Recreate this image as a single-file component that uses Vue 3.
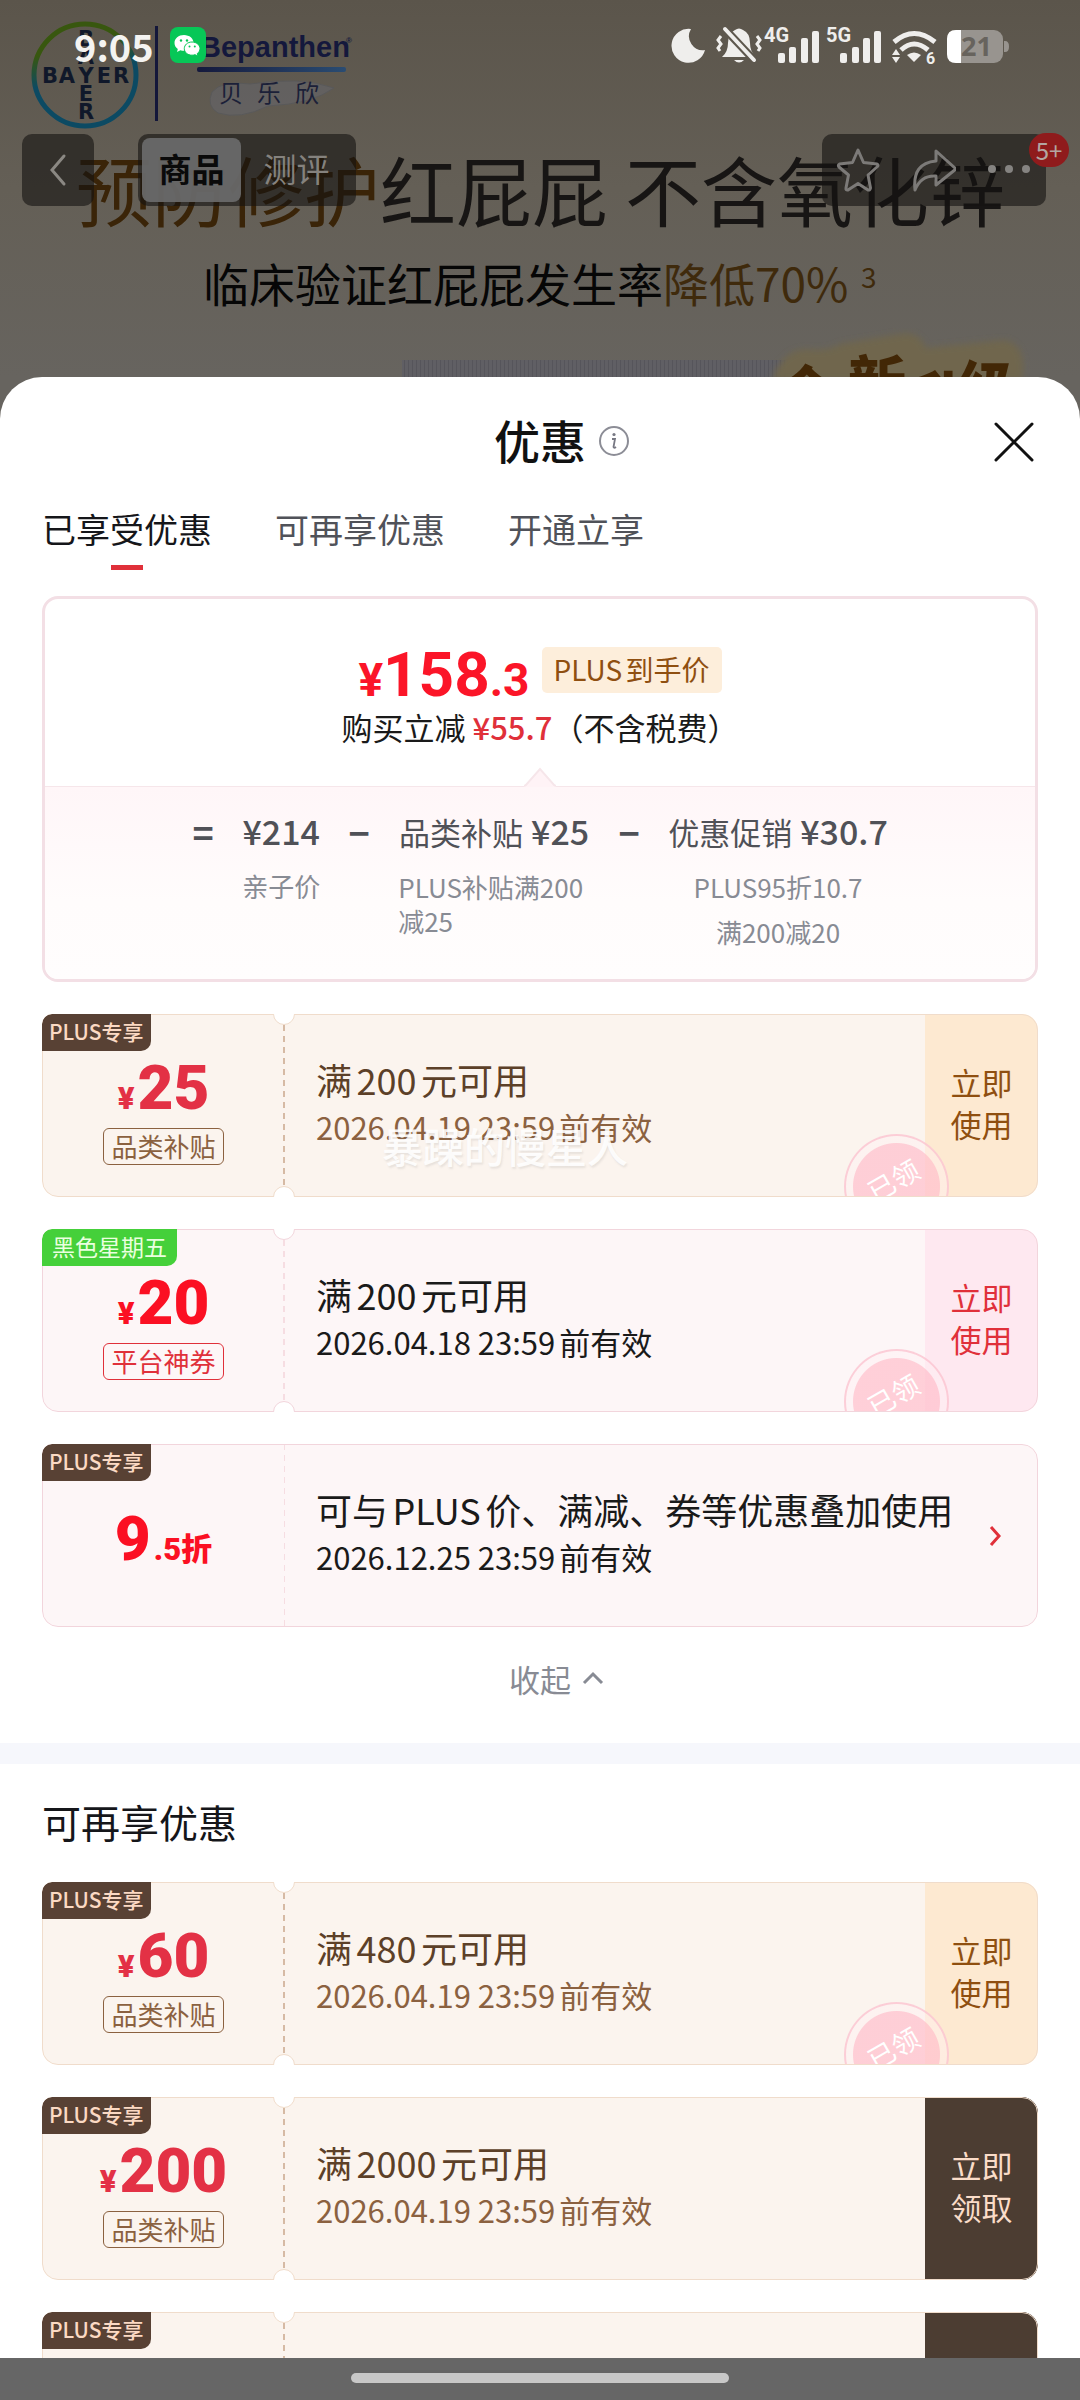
<script setup>
import { ref } from 'vue'

const tabs = ['已享受优惠', '可再享优惠', '开通立享']
const activeTab = ref(0)

const formula = [
  { op: '=', label: '', price: '¥214', notes: ['亲子价'] },
  { op: '−', label: '品类补贴', price: '¥25', notes: ['PLUS补贴满200减25'], left: true },
  { op: '−', label: '优惠促销', price: '¥30.7', notes: ['PLUS95折10.7', '满200减20'] },
]

const enjoyed = [
  { theme: 'plus', tag: 'PLUS专享', amount: '25', kind: '品类补贴', title: '满200元可用', date: '2026.04.19 23:59前有效', action: ['立即', '使用'], stamp: true },
  { theme: 'rose', tag: '黑色星期五', tagTheme: 'green', amount: '20', kind: '平台神券', title: '满200元可用', date: '2026.04.18 23:59前有效', action: ['立即', '使用'], stamp: true },
  { theme: 'rose', tag: 'PLUS专享', discount: true, title: '可与PLUS价、满减、券等优惠叠加使用', date: '2026.12.25 23:59前有效' },
]
const more = [
  { theme: 'plus', tag: 'PLUS专享', amount: '60', kind: '品类补贴', title: '满480元可用', date: '2026.04.19 23:59前有效', action: ['立即', '使用'], stamp: true },
  { theme: 'plus', tag: 'PLUS专享', amount: '200', kind: '品类补贴', title: '满2000元可用', date: '2026.04.19 23:59前有效', action: ['立即', '领取'], dark: true },
  { theme: 'plus', tag: 'PLUS专享', action: ['', ''], dark: true },
]
const groups = [
  { name: 'enjoyed', title: '', items: enjoyed },
  { name: 'more', title: '可再享优惠', items: more },
]
</script>

<template>
  <div class="app">
    <header class="hero">
      <svg class="art" viewBox="0 0 1080 377" preserveAspectRatio="xMidYMin slice" aria-hidden="true">
        <defs>
          <linearGradient id="bg" x1="0" y1="0" x2="0" y2="1">
            <stop offset="0" stop-color="#5b554b" />
            <stop offset="0.5" stop-color="#645f56" />
            <stop offset="1" stop-color="#67645f" />
          </linearGradient>
          <linearGradient id="ring" x1="0" y1="0" x2="0.25" y2="1">
            <stop offset="0.3" stop-color="#38570f" />
            <stop offset="0.6" stop-color="#0c4a63" />
          </linearGradient>
          <linearGradient id="bar" x1="0" y1="0" x2="1" y2="0">
            <stop offset="0" stop-color="#15193c" />
            <stop offset="1" stop-color="#2a4c72" />
          </linearGradient>
          <pattern id="stripe" width="4" height="20" patternUnits="userSpaceOnUse">
            <rect width="4" height="20" fill="#605f64" />
            <rect width="1" height="20" fill="#56555b" />
          </pattern>
          <filter id="soft"><feGaussianBlur stdDeviation="3" /></filter>
        </defs>
        <rect width="1080" height="377" fill="url(#bg)" />
        <circle cx="85" cy="75" r="51" fill="none" stroke="url(#ring)" stroke-width="5" />
        <g class="bayer" text-anchor="middle">
          <text y="83" x="50 67 86 104 121">BAYER</text>
          <text x="86" y="46">B</text>
          <text x="86" y="64">A</text>
          <text x="86" y="101">E</text>
          <text x="86" y="119">R</text>
        </g>
        <rect x="155" y="26" width="3" height="95" fill="#14173a" />
        <text class="brand" x="200" y="57">Bepanthen</text>
        <text class="brand tiny" x="346" y="43">®</text>
        <rect x="197" y="67" width="149" height="5" rx="2" fill="url(#bar)" />
        <path d="M212 92Q222 80 250 84Q300 76 334 88Q312 104 268 106Q240 120 218 113Q206 106 212 92Z" fill="#65656a" stroke="#55585f" opacity="0.6" />
        <text class="sub-brand" x="219 257 295" y="102">贝乐欣</text>
        <text class="headline" x="76" y="221"><tspan fill="#3a2408">预防修护</tspan>红屁屁 不含氧化锌</text>
        <text class="subline" x="203" y="302">临床验证红屁屁发生率<tspan fill="#3f2a0c">降低70%</tspan></text>
        <text class="subline note" x="861" y="288">3</text>
        <rect x="402" y="360" width="384" height="18" fill="url(#stripe)" />
        <path d="M772 380Q782 350 806 349Q828 352 840 344L900 334Q918 330 926 348L1004 340Q1028 344 1022 380Z" fill="#6f664d" filter="url(#soft)" />
        <text class="slogan" x="778 848 908 958" y="414 404 420 410">全新升级</text>
      </svg>

      <div class="status">
        <span class="clock">9:05</span>
        <svg class="wechat" width="36" height="36" viewBox="0 0 36 36" aria-label="微信">
          <rect width="36" height="36" rx="8" fill="#07c757" />
          <path d="M14 8C8.600 8 4.500 11.500 4.500 16C4.500 18.500 5.800 20.600 7.800 22L7 25L10.400 23.300C11.600 23.700 12.800 23.800 14 23.800C19.500 23.800 23.600 20.400 23.600 16S19.500 8 14 8Z" fill="#fff" />
          <path d="M22 15C17.500 15 14.300 18 14.300 21.600S17.500 28.200 22 28.200C23 28.200 24 28 25 27.700L28 29L27.300 26.500C29 25.300 30 23.500 30 21.600C30 18 26.500 15 22 15Z" fill="#fff" stroke="#07c757" />
          <g fill="#07c757"><circle cx="11" cy="13.500" r="1.200" /><circle cx="17" cy="13.500" r="1.200" /><circle cx="19.500" cy="19.500" r="1" /><circle cx="24.800" cy="19.500" r="1" /></g>
        </svg>
        <svg class="signals" width="340" height="40" viewBox="0 0 340 40" aria-label="系统状态" fill="#efeeec">
          <path d="M21 4A17 17 0 1 0 35 25A14 14 0 0 1 21 4Z" />
          <path d="M52 32Q58 27 58 18Q58 8 65 5Q69 2 73 5Q80 8 80 18Q80 27 86 32Z" />
          <path d="M64 35H74Q69 40 64 35Z" />
          <path d="M53 2L84 35" stroke="#5d574d" stroke-width="8" />
          <path d="M55 4L84 35" stroke="#efeeec" stroke-width="4" stroke-linecap="round" />
          <path d="M51 11l-3 4 3 4-3 4 2 3M87 11l3 4-3 4 3 4-2 3" fill="none" stroke="#efeeec" stroke-width="3" />
          <text class="net" x="94" y="17">4G</text>
          <text class="net" x="156" y="17">5G</text>
          <rect x="108" y="28" width="7" height="10" rx="2" /><rect x="119" y="22" width="7" height="16" rx="2" /><rect x="131" y="13" width="7" height="25" rx="2" /><rect x="142" y="6" width="7" height="32" rx="2" />
          <rect x="170" y="28" width="7" height="10" rx="2" /><rect x="182" y="22" width="7" height="16" rx="2" /><rect x="193" y="13" width="7" height="25" rx="2" /><rect x="204" y="6" width="7" height="32" rx="2" />
          <g fill="none" stroke="#efeeec" stroke-width="5"><path d="M224 17Q244 0 265 17" /><path d="M231 25Q244 13 258 25" /></g>
          <path d="M237 30Q244 25 251 30L244 37Z" />
          <path d="M226 24l4 6h-8zM226 38l-4-6h8z" />
          <circle cx="261" cy="33" r="7" fill="#5d574d" />
          <text class="six" x="256" y="39">6</text>
          <rect x="277" y="5" width="56" height="33" rx="9" fill="#98948f" />
          <path d="M334 16h1q4 0 4 5.500t-4 5.500h-1z" fill="#98948f" />
          <path d="M291 5V38H286Q277 38 277 29V14Q277 5 286 5Z" fill="#fff" />
          <text class="level" x="291" y="31">21</text>
        </svg>
      </div>

      <nav class="nav">
        <button class="glass back" aria-label="返回">
          <svg width="20" height="36" viewBox="0 0 20 36"><path d="M16 4L4 18L16 32" fill="none" stroke="#8b8883" stroke-width="3" stroke-linecap="round" /></svg>
        </button>
        <div class="glass switch">
          <button class="on">商品</button>
          <button>测评</button>
        </div>
        <div class="glass tools">
          <button aria-label="收藏">
            <svg width="46" height="48" viewBox="0 0 46 48"><path d="M23 4L28.500 16.500L42 18Q44 19 42 21L33 29L35.500 42Q35 44.500 33 44L23 37.500L13 44Q10.500 44.500 11 42L13.500 29L4 21Q2.500 19 4.500 18L17.500 16.500Z" fill="none" stroke="#7c7a78" stroke-width="3" stroke-linejoin="round" /></svg>
          </button>
          <button aria-label="分享">
            <svg width="46" height="48" viewBox="0 0 46 48"><path d="M26 5L46 23L26 39V30Q11 29 5 44Q2 17 26 15Z" fill="none" stroke="#7c7a78" stroke-width="3" stroke-linejoin="round" /></svg>
          </button>
          <button aria-label="更多">
            <svg width="46" height="48" viewBox="0 0 46 48" fill="#858381"><circle cx="8" cy="23" r="4" /><circle cx="25" cy="23" r="4" /><circle cx="42" cy="23" r="4" /></svg>
          </button>
          <span class="count">5+</span>
        </div>
      </nav>
    </header>

    <main class="sheet">
      <div class="head">
        <h1>
          优惠
          <button class="info" aria-label="说明">
            <svg width="32" height="32" viewBox="0 0 32 32"><circle cx="16" cy="16" r="14" fill="none" stroke="#8c8d96" stroke-width="2" /><circle cx="16" cy="9.500" r="1.600" fill="#777883" /><path d="M14 14H17L15.500 22Q16 23.500 18 22" fill="none" stroke="#777883" stroke-width="1.800" /></svg>
          </button>
        </h1>
        <button class="close" aria-label="关闭">
          <svg width="40" height="40" viewBox="0 0 40 40"><path d="M2 2L38 38M38 2L2 38" stroke="#111" stroke-width="3" stroke-linecap="round" /></svg>
        </button>
      </div>

      <div class="tabs" role="tablist">
        <button v-for="(t, i) in tabs" :key="t" role="tab" :class="{ active: i === activeTab }" :aria-selected="i === activeTab" @click="activeTab = i">{{ t }}</button>
      </div>

      <div class="scroll">
        <section class="price-card">
          <div class="final">
            <div class="final-row">
              <strong class="final-price"><small>¥</small>158<small>.3</small></strong>
              <span class="badge">PLUS到手价</span>
            </div>
            <p>购买立减 <b>¥55.7</b>（不含税费）</p>
          </div>
          <div class="detail">
            <svg class="arrow" width="32" height="20" viewBox="0 0 32 20"><path d="M0 19L2 18L16 2L30 18L32 19V20H0Z" fill="#fff3f6" /><path d="M0 19L2 18L16 2L30 18L32 19" fill="none" stroke="#f6e6ea" stroke-width="2" /></svg>
            <template v-for="f in formula" :key="f.price">
              <span class="op">{{ f.op }}</span>
              <div class="term" :class="{ left: f.left }">
                <div class="sum"><span v-if="f.label">{{ f.label }}</span><b>{{ f.price }}</b></div>
                <div class="notes"><span v-for="n in f.notes" :key="n">{{ n }}</span></div>
              </div>
            </template>
          </div>
        </section>

        <section v-for="g in groups" :key="g.name" class="group" :class="g.name">
          <h2 v-if="g.title">{{ g.title }}</h2>
          <ul>
            <li v-for="(c, i) in g.items" :key="i" class="coupon" :class="[c.theme, { plain: c.discount }]">
              <span class="tag" :class="c.tagTheme">{{ c.tag }}</span>
              <div class="stub">
                <div v-if="c.discount" class="amount"><span>9</span><small class="zhe">.5折</small></div>
                <template v-else-if="c.amount">
                  <div class="amount"><small>¥</small><span>{{ c.amount }}</span></div>
                  <span class="kind">{{ c.kind }}</span>
                </template>
              </div>
              <div class="body">
                <h3>{{ c.title }}</h3>
                <p>{{ c.date }}</p>
              </div>
              <button v-if="c.action" class="use" :class="{ dark: c.dark }"><span v-for="(a, n) in c.action" :key="n">{{ a }}</span></button>
              <svg v-else class="go" width="14" height="24" viewBox="0 0 14 24"><path d="M3 3L11 12L3 21" fill="none" stroke="#e0303a" stroke-width="3" /></svg>
              <template v-if="!c.discount"><i class="notch top"></i><i class="notch bottom"></i></template>
              <span v-if="c.stamp" class="stamp"><span>已领</span></span>
              <span v-if="g.name === 'enjoyed' && i === 0" class="watermark">暴躁的慢星人</span>
            </li>
          </ul>
          <button v-if="g.name === 'enjoyed'" class="fold">
            收起
            <svg width="24" height="16" viewBox="0 0 24 16"><path d="M3 13L12 4L21 13" fill="none" stroke="#888b94" stroke-width="3" /></svg>
          </button>
        </section>
      </div>
    </main>

    <footer class="home"><i></i></footer>
  </div>
</template>

<style>
body { margin: 0; }
</style>

<style scoped>
* { box-sizing: border-box; }
.app {
  height: 100vh;
  display: flex;
  flex-direction: column;
  overflow: hidden;
  background: #67645f;
  font-family: "Noto Sans CJK SC", "Noto Sans", sans-serif;
  color: #1a1a1a;
}
button { border: 0; padding: 0; background: none; font: inherit; color: inherit; }
h1, h2, h3, p, ul { margin: 0; padding: 0; font-weight: 400; list-style: none; }
svg { display: block; flex: none; }

.hero { position: relative; flex: none; height: 377px; overflow: hidden; }
.art { position: absolute; inset: 0; width: 100%; height: 100%; }
.bayer { font: 700 21px "DejaVu Sans", sans-serif; fill: #10182a; }
.brand { font: 700 29px "Liberation Sans", sans-serif; fill: #14183c; }
.brand.tiny { font-size: 8px; }
.sub-brand { font-size: 24px; fill: #1b2038; }
.headline { font-size: 76px; fill: #171514; }
.subline { font-size: 46px; fill: #060606; }
.subline.note { font-size: 28px; fill: #3f2a0c; }
.slogan { font-size: 58px; font-weight: 900; fill: #422706; }

.status { position: relative; display: flex; align-items: center; height: 90px; padding: 0 70px 0 74px; }
.clock { font-size: 38px; font-weight: 700; color: #f4f3f1; }
.wechat { margin-left: 16px; }
.signals { margin-left: auto; }
.net { font: 700 20px Roboto, sans-serif; }
.six { font: 700 16px Roboto, sans-serif; }
.level { font: 700 27px "Noto Sans", sans-serif; fill: #67635d; }

.nav { position: relative; display: flex; margin-top: 44px; padding: 0 34px 0 22px; }
.glass { height: 72px; border-radius: 10px; background: rgba(20, 18, 16, 0.6); display: flex; align-items: center; }
.back { width: 72px; justify-content: center; }
.switch { width: 218px; margin-left: 44px; padding: 4px; font-size: 33px; line-height: 60px; color: #85827e; }
.switch button { flex: 1; height: 64px; padding-bottom: 4px; }
.switch .on { flex: none; width: 99px; border-radius: 8px; background: rgba(106, 106, 106, 0.93); color: #0a0a0a; font-weight: 700; }
.tools { position: relative; width: 224px; margin-left: auto; padding: 0 16px 0 13px; justify-content: space-between; }
.count { position: absolute; right: -23px; top: -1px; width: 40px; height: 34px; border-radius: 17px; background: #8f1b1c; color: #b3a6a2; font-size: 24px; line-height: 34px; text-align: center; }

.sheet { flex: 1; min-height: 0; display: flex; flex-direction: column; background: #fff; border-radius: 42px 42px 0 0; overflow: hidden; }
.head { position: relative; flex: none; display: flex; align-items: center; justify-content: center; height: 124px; }
.head h1 { position: relative; font-size: 46px; font-weight: 500; line-height: 60px; color: #111; }
.info { position: absolute; left: 100%; top: 16px; margin-left: 12px; }
.close { position: absolute; right: 46px; top: 45px; }
.tabs { flex: none; display: flex; gap: 63px; padding: 0 42px; font-size: 34px; line-height: 56px; color: #505259; }
.tabs button { position: relative; height: 69px; padding-bottom: 13px; }
.tabs .active { color: #15161a; }
.tabs .active::after { content: ""; position: absolute; left: 50%; bottom: 0; width: 32px; height: 5px; margin-left: -16px; background: #e0303a; }
.scroll { flex: 1; min-height: 0; margin-top: 26px; overflow-y: auto; scrollbar-width: none; }

.price-card { margin: 0 42px 32px; border: 3px solid #f3dfe5; border-radius: 16px; overflow: hidden; }
.final { display: flex; flex-direction: column; align-items: center; padding: 41px 0 34px; font-size: 31px; }
.final-row { display: flex; align-items: center; gap: 12px; height: 60px; }
.final-price { padding-top: 9px; font: 700 62px/60px Roboto, sans-serif; color: #fb1528; }
.final-price small { font-size: 46px; line-height: 46px; }
.badge { height: 46px; padding: 0 12px; border-radius: 5px; background: #fdeedb; color: #8f4f10; font-size: 28px; line-height: 44px; text-autospace: normal; }
.final p { margin-top: 2px; line-height: 50px; }
.final p b { font-weight: 500; color: #e0303a; }
.detail { position: relative; display: flex; justify-content: center; gap: 28px; padding: 21px 0 30px; border-top: 1px solid #f6e6ea; background: linear-gradient(#fff6f8, #fffcfc 60%, #fffdfd); color: #505157; }
.arrow { position: absolute; left: 50%; top: -20px; margin-left: -16px; }
.op { width: 22px; text-align: center; font-size: 36px; font-weight: 700; line-height: 46px; }
.term { display: flex; flex-direction: column; align-items: center; }
.sum { display: flex; gap: 8px; align-items: baseline; font-size: 31px; line-height: 46px; }
.sum b { font-size: 34px; font-weight: 500; line-height: 46px; }
.notes { display: flex; flex-direction: column; align-items: center; gap: 11px; margin-top: 15px; font-size: 26px; line-height: 34px; color: #888b94; }
.left .notes { align-self: flex-start; max-width: 192px; }

.group { padding: 0 42px; }
.group ul { display: flex; flex-direction: column; gap: 32px; }
.group.more { border-top: 21px solid #f6f7fc; }
.group h2 { margin-bottom: 4px; font-size: 39px; font-weight: 400; line-height: 114px; color: #15161a; }
.fold { display: flex; align-items: center; justify-content: center; gap: 10px; width: 100%; height: 102px; margin-bottom: 14px; padding-left: 34px; font-size: 31px; color: #888b94; }

.coupon { --bg: #fbf4ee; --line: #f0dccb; --dash: #d6baa4; --title: #5c4028; --date: #8b6140; --num: #e33145; --kind: #8b6140; --btn: #fde9d1; --btntext: #8f4f10; position: relative; display: flex; height: 183px; overflow: hidden; border-radius: 10px 16px 16px 16px; background: var(--bg); }
.coupon::after { content: ""; position: absolute; inset: 0; border: 1px solid var(--line); border-radius: inherit; pointer-events: none; }
.coupon.rose { --bg: #fdf6f7; --line: #f2d5dc; --dash: #f6dde2; --title: #1a1a1a; --date: #1a1a1a; --num: #fb1023; --kind: #e0303a; --btn: #fee8f0; --btntext: #e0303a; }
.tag { position: absolute; z-index: 1; left: 0; top: 0; height: 37px; padding: 0 7px; border-radius: 10px 0 10px 0; background: #584134; color: #fbd9c3; font-size: 21px; font-weight: 500; line-height: 34px; }
.tag.green { padding: 0 10px; background: #45d03a; color: #eaffdf; font-weight: 400; font-size: 23px; }
.stub { flex: none; display: flex; flex-direction: column; align-items: center; width: 243px; padding-top: 44px; background: repeating-linear-gradient(to bottom, var(--dash) 0 6px, transparent 6px 11px) right top / 2px 100% no-repeat; }
.amount { display: flex; align-items: baseline; gap: 3px; height: 60px; font: 900 62px/60px Roboto, "Noto Sans CJK SC", sans-serif; color: var(--num); }
.amount small { font-size: 31px; line-height: 31px; }
.kind { height: 37px; margin-top: 10px; padding: 0 7px; border: 1px solid currentColor; border-radius: 6px; color: var(--kind); font-size: 26px; line-height: 33px; }
.plain .stub { padding-top: 6px; justify-content: center; background-size: 1px 100%; }
.body { flex: 1; display: flex; flex-direction: column; justify-content: center; padding: 0 0 8px 31px; white-space: nowrap; text-autospace: normal; }
.body h3 { font-size: 36px; line-height: 50px; color: var(--title); }
.body p { font-size: 31px; line-height: 46px; color: var(--date); }
.use { display: flex; flex-direction: column; align-items: center; justify-content: center; width: 113px; padding-bottom: 6px; background: var(--btn); color: var(--btntext); font-size: 31px; line-height: 42px; }
.use.dark { background: #4c3d32; color: #fadcc8; }
.go { align-self: center; margin-right: 36px; }
.notch { position: absolute; z-index: 1; left: 231px; width: 22px; height: 22px; border: 1px solid var(--line); border-radius: 50%; background: #fff; }
.notch.top { top: -11px; }
.notch.bottom { bottom: -11px; }
.stamp { position: absolute; right: 89px; top: 120px; display: flex; align-items: center; justify-content: center; width: 105px; height: 105px; border: 2px solid rgba(251, 190, 204, 0.7); border-radius: 50%; background: radial-gradient(circle, rgba(255, 194, 206, 0.75) 43px, rgba(255, 240, 242, 0.45) 44px); color: #fff; font-size: 27px; }
.stamp span { transform: rotate(-30deg); padding-bottom: 16px; }
.watermark { position: absolute; left: 340px; top: 102px; font-size: 41px; font-weight: 500; line-height: 58px; color: rgba(255, 255, 255, 0.9); text-shadow: 1px 2px 2px rgba(120, 120, 120, 0.15); }

.home { flex: none; display: flex; justify-content: center; align-items: center; height: 42px; background: #666; }
.home i { width: 35%; height: 10px; margin-top: -2px; border-radius: 5px; background: #c8c8c8; }
</style>
